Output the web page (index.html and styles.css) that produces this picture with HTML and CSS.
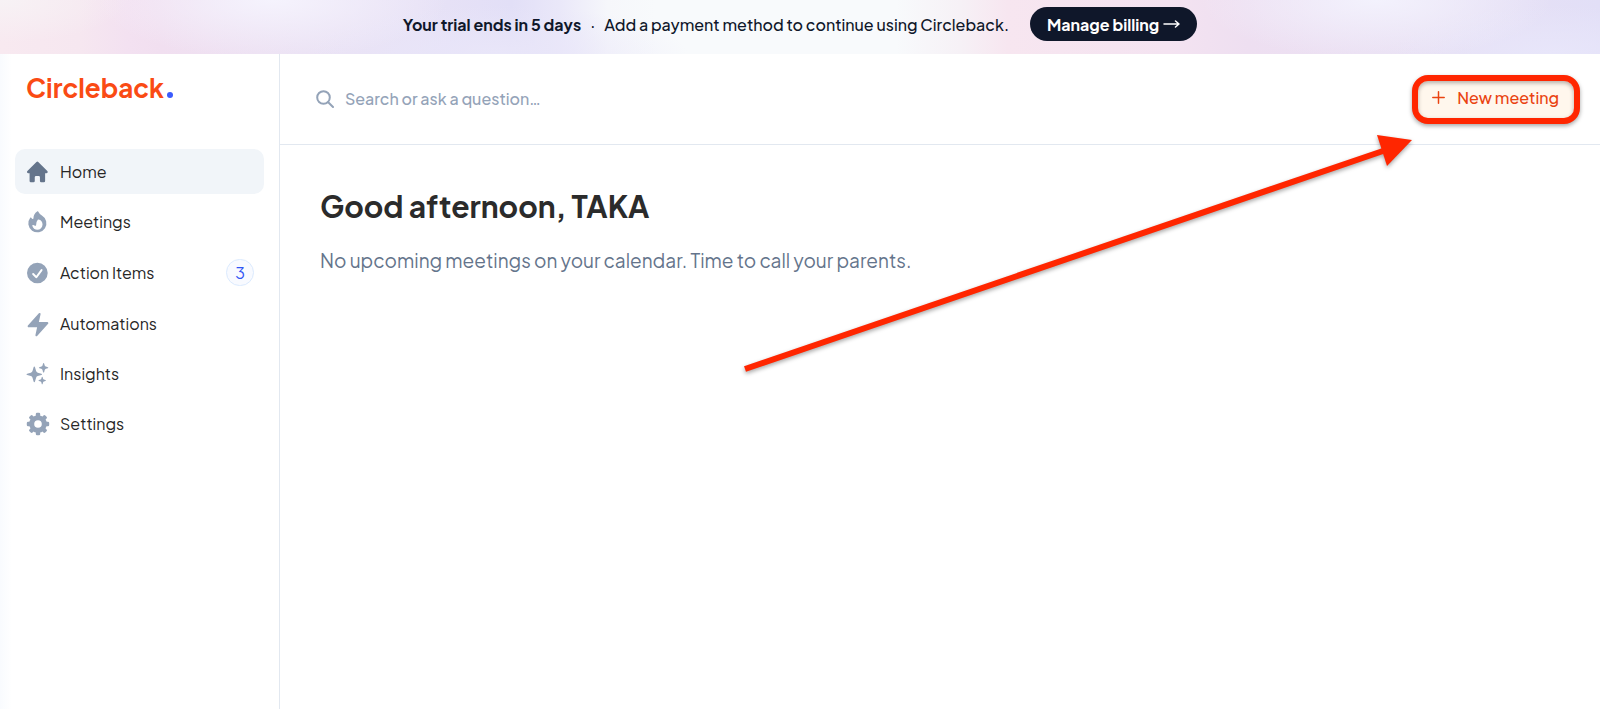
FILE: index.html
```html
<!DOCTYPE html>
<html lang="en">
<head>
  <meta charset="UTF-8" />
  <meta name="viewport" content="width=device-width, initial-scale=1.0"/>
  <title>Circleback</title>
  <link rel="stylesheet" href="styles.css">
</head>
<body>

<div class="banner">
  <strong>Your trial ends in 5 days</strong>
  <span class="dot">·</span>
  <span>Add a payment method to continue using Circleback.</span>
  <button class="billing-btn">Manage billing <svg width="17" height="10" viewBox="0 0 17 10" fill="none" stroke="currentColor" stroke-width="1.5" stroke-linecap="round" stroke-linejoin="round"><path d="M1 5h15M12.500 2l3.500 3-3.500 3"/></svg></button>
</div>

<div class="app">

  <aside class="sidebar">
    <a class="logo" href="#">Circleback<span class="logo-dot"></span></a>

    <nav>
      <a class="active" href="#">
        <svg viewBox="2 1.5 17 17"><path d="M9.293 2.293a1 1 0 011.414 0l7 7A1 1 0 0117 11h-1v6a1 1 0 01-1 1h-2a1 1 0 01-1-1v-3a1 1 0 00-1-1H9a1 1 0 00-1 1v3a1 1 0 01-1 1H5a1 1 0 01-1-1v-6H3a1 1 0 01-.707-1.707l7-7z"/></svg>
        Home
      </a>
      <a href="#">
        <svg viewBox="2 1.5 17 17"><path fill-rule="evenodd" d="M13.5 4.938a7 7 0 11-9.006 1.737c.202-.257.59-.218.793.039.278.352.594.672.943.954.332.269.786-.049.773-.476a5.977 5.977 0 01.572-2.759 6.026 6.026 0 012.486-2.665c.247-.14.55-.016.677.238A6.967 6.967 0 0013.5 4.938zM14 12a4 4 0 01-4 4c-1.913 0-3.52-1.398-3.91-3.182-.093-.429.44-.643.814-.413a4.043 4.043 0 001.601.564c.303.038.531-.24.51-.544a5.975 5.975 0 011.315-4.192.447.447 0 01.431-.16A4.001 4.001 0 0114 12z"/></svg>
        Meetings
      </a>
      <a href="#">
        <svg viewBox="2 1.5 17 17"><path fill-rule="evenodd" d="M10 18a8 8 0 100-16 8 8 0 000 16zm3.857-9.809a.75.75 0 00-1.214-.882l-3.483 4.79-1.88-1.88a.75.75 0 10-1.06 1.061l2.5 2.5a.75.75 0 001.137-.089l4-5.5z"/></svg>
        Action Items
        <span class="badge">3</span>
      </a>
      <a href="#">
        <svg viewBox="1.5 1 17 17"><path d="M11.983 1.907a.75.75 0 00-1.292-.657l-8.5 9.5A.75.75 0 002.75 12h6.572l-1.305 6.093a.75.75 0 001.292.657l8.5-9.5A.75.75 0 0017.25 8h-6.572l1.305-6.093z"/></svg>
        Automations
      </a>
      <a href="#">
        <svg viewBox="0 0 22 22"><path d="M7.3 3.6q.5 0 .7.7l1.1 3.8q.4 1.300 1.700 1.700l3.600 1q.6.3.6.6t-.6.6l-3.600 1q-1.300.4-1.700 1.700l-1.100 3.900q-.2.600-.700.600t-.700-.600l-1.100-3.900q-.4-1.300-1.700-1.700l-3.600-1q-.700-.200-.700-.600t.700-.600l3.600-1q1.300-.4 1.700-1.700l1.100-3.800q.2-.7.7-.7z"/><path d="M16.600.1q.4 0 .6.600l.5 1.700q.3.900 1.200 1.200l1.900.6q.5.200.5.500t-.5.500l-1.900.6q-.9.300-1.200 1.200l-.5 1.900q-.2.500-.6.500t-.6-.5l-.5-1.900q-.3-.9-1.200-1.200l-1.900-.6q-.5-.2-.5-.5t.5-.5l1.900-.6q.9-.3 1.200-1.200l.5-1.700q.2-.6.6-.6z"/><path d="M15.200 13.800q.4 0 .5.500l.4 1.400q.2.600.8.800l1.500.500q.5.200.5.500t-.5.500l-1.500.5q-.6.200-.8.800l-.4 1.500q-.1.500-.5.500t-.5-.5l-.4-1.500q-.2-.6-.8-.8l-1.500-.5q-.5-.2-.5-.5t.5-.5l1.500-.5q.6-.2.800-.8l.4-1.400q.1-.5.500-.5z"/></svg>
        Insights
      </a>
      <a href="#">
        <svg viewBox="0 0 22 22">
          <circle cx="11" cy="11" r="6.300" fill="none" stroke="currentColor" stroke-width="5"/>
          <g id="teeth"><rect x="8.800" y="-.2" width="4.400" height="5" rx="1.300"/><rect x="8.800" y="17.200" width="4.400" height="5" rx="1.300"/></g>
          <use href="#teeth" transform="rotate(45 11 11)"/>
          <use href="#teeth" transform="rotate(90 11 11)"/>
          <use href="#teeth" transform="rotate(135 11 11)"/>
        </svg>
        Settings
      </a>
    </nav>
  </aside>

  <main>
    <div class="topbar">
      <label class="search">
        <svg width="18" height="18" viewBox="0 0 18 18" fill="none" stroke="currentColor" stroke-width="2" stroke-linecap="round"><circle cx="7.500" cy="7.500" r="6.300"/><path d="M12.200 12.200L17 17"/></svg>
        <input type="text" placeholder="Search or ask a question…" aria-label="Search" />
      </label>
      <button class="new-btn">
        <svg width="13" height="13" viewBox="0 0 13 13" stroke="currentColor" stroke-width="1.5" stroke-linecap="round"><path d="M6.500 .8v11.400M.8 6.500h11.400"/></svg>
        New meeting
      </button>
    </div>

    <div class="content">
      <h1>Good afternoon, TAKA</h1>
      <p>No upcoming meetings on your calendar. Time to call your parents.</p>
    </div>
  </main>

</div>

<!-- arrow pointing at New meeting -->
<svg class="arrow" width="680" height="250" viewBox="0 0 680 250">
  <path d="M5 239L643 21" stroke="#ff2600" stroke-width="6"/>
  <path d="M672 10L637 5L647 36z" fill="#ff2600"/>
</svg>

</body>
</html>
```
FILE: styles.css
```css
* {
  box-sizing: border-box;
}

body {
  font-family: 'Plus Jakarta Sans', Inter, sans-serif;
  font-size: 16px;
  color: #262626;
  background: #fff;
  margin: 0;
  min-height: 100vh;
  display: flex;
  flex-direction: column;
}

a {
  color: inherit;
  text-decoration: none;
}

button,
input {
  font: inherit;
}

.banner {
  display: flex;
  align-items: center;
  justify-content: center;
  height: 54px;
  padding-bottom: 6px;
  color: #0f172a;
  font-weight: 500;
  background:
    radial-gradient(ellipse 11% 110% at 17% 0, #f5f3fd, transparent),
    radial-gradient(ellipse 11% 110% at 86% 0, #f3f2fd, transparent),
    radial-gradient(ellipse 12% 90% at 31% 100%, #e9e6f9, transparent),
    radial-gradient(ellipse 10% 90% at 97% 100%, #e8e6fa, transparent),
    radial-gradient(ellipse 8% 80% at 0 0, #f7f2f5, transparent),
    linear-gradient(90deg, #f8e9f0 0, #f6e7f0 5%, #f3e1f1 8%, #f1dff0 10%, #ebe2f4 19%, #e8e2f6 26%, #e2dff7 32%, #eae8f9 35%, #f6f7fb 38%, #f8fafc 41%, #f8fafc 56%, #f6f1f6 60%, #f7e6f0 63%, #f4e3f1 73%, #eedff1 78%, #e9e1f4 89%, #e2dff7 100%);
}

.banner strong {
  font-weight: 700;
}

.dot {
  margin: 0 9px;
}

.billing-btn {
  display: flex;
  align-items: center;
  gap: 4px;
  margin-left: 21px;
  height: 34px;
  padding: 0 17px;
  border: none;
  border-radius: 17px;
  background: #0f172a;
  color: #fff;
  font-weight: 700;
  white-space: nowrap;
  cursor: pointer;
}

.app {
  flex: 1;
  display: flex;
}

.sidebar {
  width: 280px;
  flex-shrink: 0;
  border-right: 1px solid #e2e8f0;
  background: linear-gradient(90deg, #f9fbfe, #fff 12px);
}

.logo {
  display: flex;
  align-items: baseline;
  gap: 3px;
  padding: 17px 26px 0;
  height: 95px;
  font-size: 26px;
  line-height: 34px;
  font-weight: 700;
  color: #fa4b14;
}

.logo-dot {
  width: 6px;
  height: 6px;
  border-radius: 50%;
  background: #3b5bfd;
}

nav {
  display: flex;
  flex-direction: column;
  gap: 5px;
  padding: 0 15px;
}

nav a {
  display: flex;
  align-items: center;
  gap: 11px;
  padding: 10px 10px 10px 12px;
  border-radius: 10px;
  line-height: 25px;
}

nav a.active {
  background: #f1f5f9;
}

nav svg {
  width: 22px;
  height: 22px;
  color: #94a3b8;
  fill: currentColor;
  overflow: visible;
}

nav a.active svg {
  color: #64748b;
}

.badge {
  margin-left: auto;
  width: 28px;
  height: 27px;
  border: 1px solid #dbeafe;
  border-radius: 14px;
  background: #f8faff;
  color: #2f54f5;
  text-align: center;
}

main {
  flex: 1;
  min-width: 0;
}

.topbar {
  display: flex;
  align-items: center;
  justify-content: space-between;
  height: 91px;
  padding: 0 20px 0 36px;
  border-bottom: 1px solid #e2e8f0;
}

.search {
  flex: 1;
  display: flex;
  align-items: center;
  gap: 11px;
  color: #94a3b8;
}

.search input {
  flex: 1;
  padding: 0 0 2px;
  border: none;
  outline: none;
  background: none;
  font-weight: 500;
}

.search input::placeholder {
  color: #94a3b8;
}

.new-btn {
  display: flex;
  align-items: center;
  gap: 12px;
  height: 49px;
  padding: 0 15px 4px 14px;
  border: 6px solid #ff2600;
  border-radius: 16px;
  background: #fff7ed;
  color: #ea4310;
  font-weight: 500;
  white-space: nowrap;
  box-shadow: 0 2px 4px rgba(0,0,0,0.35), inset 0 2px 4px rgba(0,0,0,0.3);
  cursor: pointer;
}

.content {
  padding: 40px;
}

h1 {
  margin: 0 0 20px;
  font-size: 30px;
  line-height: 42px;
  font-weight: 700;
  color: #2b2b2b;
}

.content p {
  margin: 0;
  font-size: 19px;
  line-height: 26px;
  color: #64748b;
}

.arrow {
  position: absolute;
  top: 130px;
  right: 180px;
  pointer-events: none;
  overflow: visible;
  filter: drop-shadow(0 2px 2px rgba(0,0,0,0.35));
}
```
